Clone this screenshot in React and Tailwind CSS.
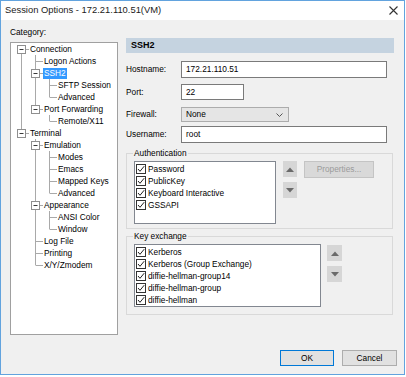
import React from "react";

const ui = { fontFamily: '"Liberation Sans", Arial, sans-serif' };

const TREE = [
  [0, "Connection", true],
  [1, "Logon Actions"],
  [1, "SSH2", true, true],
  [2, "SFTP Session"],
  [2, "Advanced"],
  [1, "Port Forwarding", true],
  [2, "Remote/X11"],
  [0, "Terminal", true],
  [1, "Emulation", true],
  [2, "Modes"],
  [2, "Emacs"],
  [2, "Mapped Keys"],
  [2, "Advanced"],
  [1, "Appearance", true],
  [2, "ANSI Color"],
  [2, "Window"],
  [1, "Log File"],
  [1, "Printing"],
  [1, "X/Y/Zmodem"],
];

// does the row at index r have a later sibling at the same level?
const hasNext = (r) => {
  const lvl = TREE[r][0];
  for (let i = r + 1; i < TREE.length; i++) {
    if (TREE[i][0] < lvl) return false;
    if (TREE[i][0] === lvl) return true;
  }
  return false;
};

const ancestorContinues = (r, lvl) => {
  for (let i = r - 1; i >= 0; i--) {
    if (TREE[i][0] === lvl) return hasNext(i);
    if (TREE[i][0] < lvl) return false;
  }
  return false;
};

const Connector = ({ r }) => {
  const [lvl, , expander] = TREE[r];
  const w = (lvl + 1) * 14;
  const line = "#a9a9a9";
  const parts = [];
  for (let i = 0; i < lvl; i++) {
    if (ancestorContinues(r, i)) {
      parts.push(<line key={"a" + i} x1={i * 14 + 6.5} y1={0} x2={i * 14 + 6.5} y2={12} stroke={line} />);
    }
  }
  const cx = lvl * 14 + 6.5;
  if (r !== 0) parts.push(<line key="up" x1={cx} y1={0} x2={cx} y2={6} stroke={line} />);
  if (hasNext(r)) parts.push(<line key="dn" x1={cx} y1={6} x2={cx} y2={12} stroke={line} />);
  parts.push(<line key="h" x1={cx} y1={6.5} x2={lvl * 14 + 14} y2={6.5} stroke={line} />);
  if (expander) {
    parts.push(
      <g key="box">
        <rect x={cx - 4} y={2.5} width={8} height={8} fill="#ffffff" stroke="#8f8f8f" />
        <line x1={cx - 2} y1={6.5} x2={cx + 2} y2={6.5} stroke="#3a3a3a" />
      </g>
    );
  }
  return (
    <svg width={w} height={12} className="shrink-0">
      {parts}
    </svg>
  );
};

const Tree = () => (
  <div className="w-[108px] h-[293px] mt-[2px] border border-[#a0a0a0] bg-white pl-[4px]">
    {TREE.map(([lvl, label, , selected], r) => (
      <div key={r} className="flex items-center h-[12px]">
        <Connector r={r} />
        <span
          className={
            "text-[8.3px] leading-[11px] px-[1px] whitespace-nowrap " +
            (selected ? "bg-[#3399ff] text-white" : "text-black")
          }
        >
          {label}
        </span>
      </div>
    ))}
  </div>
);

const Check = () => (
  <span className="w-[10px] h-[10px] border border-[#333333] bg-white shrink-0 flex items-center justify-center">
    <svg width="8" height="8" viewBox="0 0 8 8">
      <path d="M1 4 L3 6.3 L7.2 1.2" fill="none" stroke="#222222" strokeWidth="1" />
    </svg>
  </span>
);

const CheckList = ({ items, w }) => (
  <div className={"h-[63px] border border-[#828790] bg-white pt-[1px] pl-[1px] " + w}>
    {items.map((t) => (
      <div key={t} className="flex items-center gap-[2px] h-[12px]">
        <Check />
        <span className="text-[8.3px] leading-[12px] whitespace-nowrap">{t}</span>
      </div>
    ))}
  </div>
);

const ArrowBtn = ({ up, w }) => (
  <div className={"h-[16px] bg-[#d6d6d6] flex items-center justify-center " + w}>
    <svg width="8" height="5" viewBox="0 0 8 5">
      {up ? <path d="M0 5 L4 0.5 L8 5 Z" fill="#6a6a6a" /> : <path d="M0 0 L4 4.5 L8 0 Z" fill="#6a6a6a" />}
    </svg>
  </div>
);

const Field = ({ label, children, mt, h }) => (
  <div className={"flex items-center " + mt + " " + h}>
    <span className="w-[55px] text-[8.3px] shrink-0">{label}</span>
    {children}
  </div>
);

const Input = ({ value, w, h }) => (
  <div className={"border border-[#7a7a7a] bg-white flex items-center pl-[4px] text-[8.3px] " + w + " " + h}>
    {value}
  </div>
);

const App = () => {
  return (
    <div className="w-[406px] h-[377px] bg-white" style={ui}>
      <div className="w-[405px] h-[375px] border border-[#62a3de] bg-[#f0f0f0] flex flex-col">
        {/* title bar */}
        <div className="h-[19px] bg-white flex items-center justify-between pl-[4px] pr-[6px] shrink-0">
          <span className="text-[9.4px] text-[#1a1a1a]">Session Options - 172.21.110.51(VM)</span>
          <svg width="9" height="9" viewBox="0 0 9 9">
            <path d="M0.5 0.5 L8.5 8.5 M8.5 0.5 L0.5 8.5" stroke="#333333" strokeWidth="1.1" />
          </svg>
        </div>

        {/* body */}
        <div className="flex pt-[4px] pl-[9px]">
          <div className="flex flex-col">
            <span className="h-[16px] leading-[16px] text-[8.3px]">Category:</span>
            <Tree />
          </div>

          <div className="w-[268px] ml-[8px] mt-[14px] flex flex-col">
            <div className="h-[15px] bg-[#c5d3e0] flex items-center pl-[5px] text-[9px] font-bold">SSH2</div>

            <Field label="Hostname:" mt="mt-[8px]" h="h-[17px]">
              <Input value="172.21.110.51" w="w-[206px]" h="h-[17px]" />
            </Field>
            <Field label="Port:" mt="mt-[6px]" h="h-[16px]">
              <Input value="22" w="w-[63px]" h="h-[16px]" />
            </Field>
            <Field label="Firewall:" mt="mt-[7px]" h="h-[15px]">
              <div className="w-[108px] h-[15px] border border-[#acacac] bg-[#e5e5e5] flex items-center justify-between pl-[4px] pr-[5px] text-[8.3px]">
                None
                <svg width="7" height="4" viewBox="0 0 7 4">
                  <path d="M0.5 0.5 L3.5 3.5 L6.5 0.5" fill="none" stroke="#555555" />
                </svg>
              </div>
            </Field>
            <Field label="Username:" mt="mt-[4px]" h="h-[17px]">
              <Input value="root" w="w-[206px]" h="h-[17px]" />
            </Field>

            {/* Authentication */}
            <fieldset className="mt-[5px] w-[267px] border border-[#d9d9d9] pl-[7px] pb-[4px]">
              <legend className="text-[8.3px] leading-[10px] ml-[-1px] px-[1px]">Authentication</legend>
              <div className="flex mt-[3px]">
                <CheckList w="w-[142px]" items={["Password", "PublicKey", "Keyboard Interactive", "GSSAPI"]} />
                <div className="flex flex-col ml-[7px] gap-[5px]">
                  <ArrowBtn up w="w-[14px]" />
                  <ArrowBtn w="w-[14px]" />
                </div>
                <div className="ml-[7px] w-[70px] h-[17px] border border-[#c4c4c4] bg-[#d9d9d9] flex items-center justify-center text-[8.3px] text-[#9b9b9b]">
                  Properties...
                </div>
              </div>
            </fieldset>

            {/* Key exchange */}
            <fieldset className="mt-[2px] w-[267px] border border-[#d9d9d9] pl-[7px] pb-[7px]">
              <legend className="text-[8.3px] leading-[10px] ml-[-1px] px-[1px]">Key exchange</legend>
              <div className="flex mt-[3px]">
                <CheckList
                  w="w-[187px]"
                  items={[
                    "Kerberos",
                    "Kerberos (Group Exchange)",
                    "diffie-hellman-group14",
                    "diffie-hellman-group",
                    "diffie-hellman",
                  ]}
                />
                <div className="flex flex-col ml-[6px] mt-[1px] gap-[5px]">
                  <ArrowBtn up w="w-[15px]" />
                  <ArrowBtn w="w-[15px]" />
                </div>
              </div>
            </fieldset>
          </div>
        </div>

        {/* dialog buttons */}
        <div className="flex justify-end gap-[8px] pr-[7px] mt-[15px]">
          <button className="w-[54px] h-[16px] bg-[#e1e1e1] border border-[#0078d7] text-[8.3px] flex items-center justify-center">
            OK
          </button>
          <button className="w-[55px] h-[16px] bg-[#e1e1e1] border border-[#adadad] text-[8.3px] flex items-center justify-center">
            Cancel
          </button>
        </div>
      </div>
    </div>
  );
};

export default App;
